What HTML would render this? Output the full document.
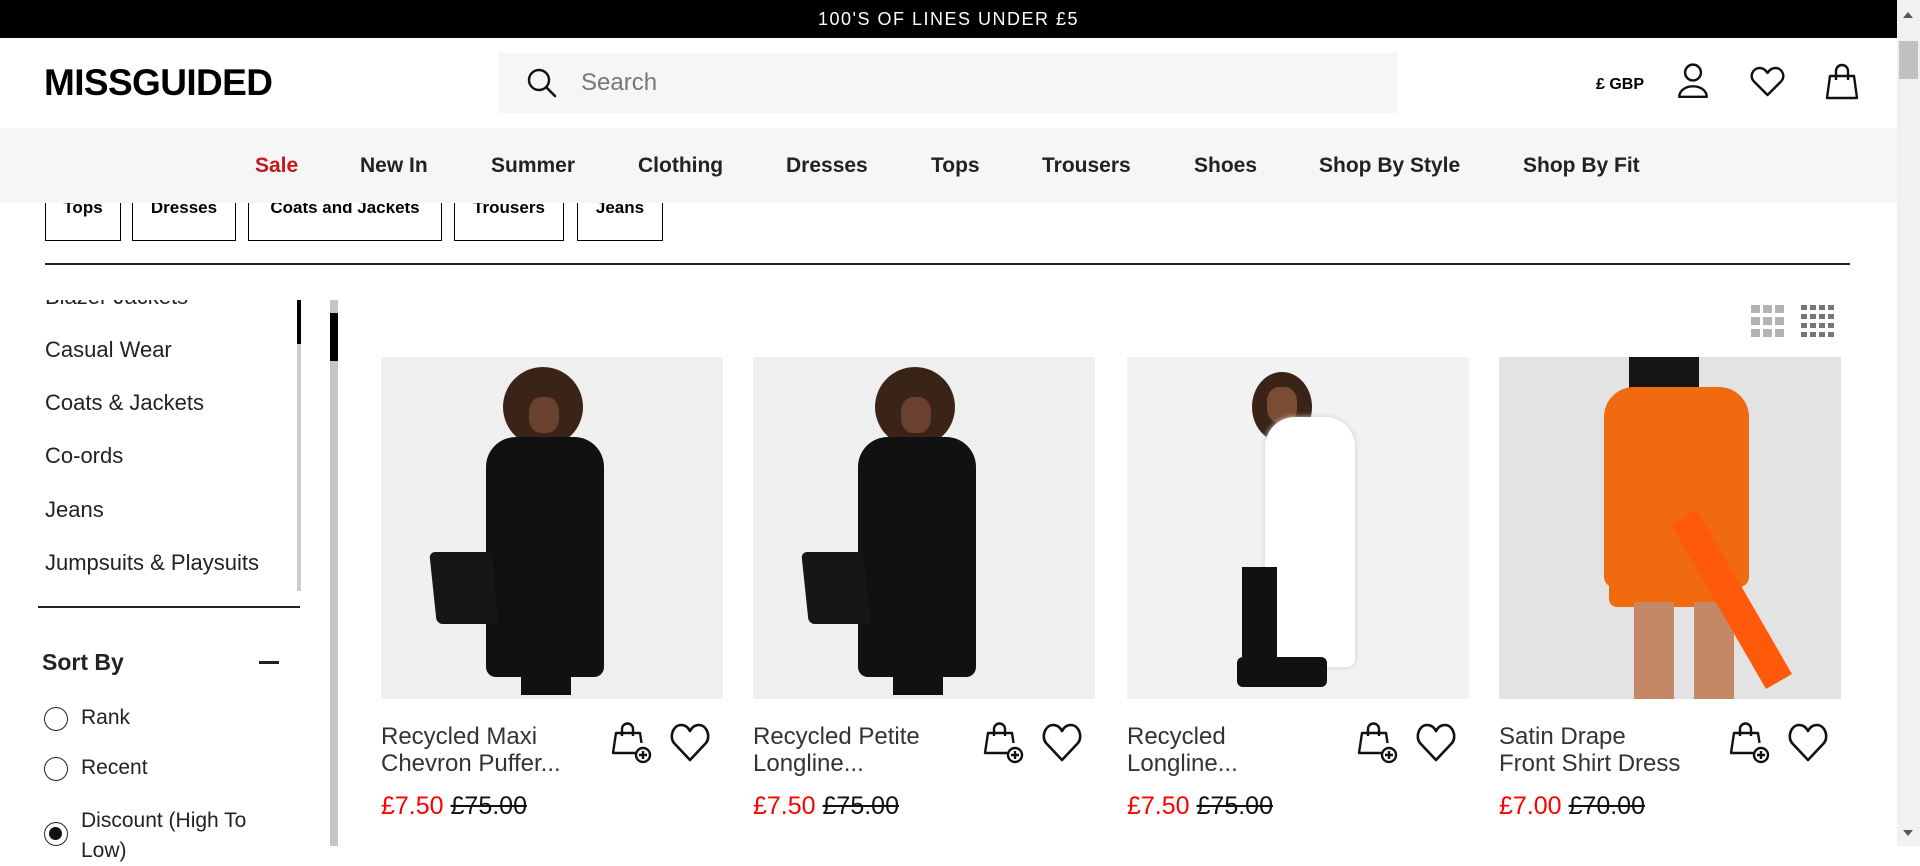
<!DOCTYPE html>
<html><head><meta charset="utf-8"><style>
*{margin:0;padding:0;box-sizing:border-box}
body{width:1920px;height:846px;overflow:hidden;background:#fff;font-family:"Liberation Sans",sans-serif;color:#000;position:relative}
.a{position:absolute}
.nav span{position:absolute;top:154px;font-size:21px;font-weight:bold;color:#222;white-space:nowrap}
.chip{position:absolute;top:180px;height:61px;border:1px solid #000;border-top:none;font-size:17px;font-weight:bold;text-align:center;padding-top:18px}
.li{position:absolute;left:45px;font-size:22px;color:#222;white-space:nowrap}
.radio{position:absolute;left:44px;width:24px;height:24px;border:1.5px solid #222;border-radius:50%}
.rl{position:absolute;left:81px;font-size:21px;color:#222}
.img{position:absolute;top:357px;width:342px;height:342px;background:#efefef;overflow:hidden}
.t{position:absolute;top:723px;font-size:24px;line-height:27px;color:#333;white-space:nowrap}
.p{position:absolute;top:792px;font-size:25px;white-space:nowrap}
.p b{color:#f00;font-weight:normal}
.p s{color:#111}
</style></head><body>
<div class="a" style="left:0;top:0;width:1897px;height:38px;background:#000;color:#fff;font-size:18px;letter-spacing:1.5px;text-align:center;line-height:38px">100'S OF LINES UNDER £5</div>

<div class="a" style="left:44px;top:62px;font-size:37px;font-weight:bold;letter-spacing:-0.6px">MISSGUIDED</div>
<div class="a" style="left:498px;top:53px;width:900px;height:60px;background:#f6f6f6"></div>
<svg class="a" style="left:526px;top:67px" width="32" height="32" viewBox="0 0 32 32"><circle cx="13" cy="13" r="10" fill="none" stroke="#111" stroke-width="2.4"/><path d="M20.5 20.5L29 29" stroke="#111" stroke-width="2.6" stroke-linecap="round"/></svg>
<div class="a" style="left:581px;top:69px;font-size:24px;color:#777">Search</div>
<div class="a" style="left:1596px;top:76px;font-size:16px;font-weight:bold">£ GBP</div>
<svg class="a" style="left:1676px;top:62px" width="34" height="38" viewBox="0 0 30 36" fill="none" stroke="#111" stroke-width="2.3"><circle cx="15" cy="10" r="7.5"/><path d="M2 33c0-6 6-10 13-10s13 4 13 10z" stroke-linejoin="round"/></svg>
<svg class="a" style="left:1750px;top:66px" width="35" height="32" viewBox="0 0 35 32" fill="none" stroke="#111" stroke-width="2.4" stroke-linejoin="round"><path d="M17.5 29L4 15.5C-1 10 3 2 9.5 2c4 0 6.5 2.5 8 5 1.5-2.5 4-5 8-5C32 2 36 10 31 15.5z"/></svg>
<svg class="a" style="left:1825px;top:63px" width="34" height="38" viewBox="0 0 34 38" fill="none" stroke="#111" stroke-width="2.4" stroke-linejoin="round"><path d="M5 13h24l3 22H2z"/><path d="M11 17V8a6 6 0 0112 0v9"/></svg>

<div class="a" style="left:0;top:128px;width:1897px;height:75px;background:#f6f6f6;z-index:2"></div>
<div class="nav a" style="left:0;top:0;z-index:3">
<span style="left:255px;color:#c8161d">Sale</span><span style="left:360px">New In</span><span style="left:491px">Summer</span><span style="left:638px">Clothing</span><span style="left:786px">Dresses</span><span style="left:931px">Tops</span><span style="left:1042px">Trousers</span><span style="left:1194px">Shoes</span><span style="left:1319px">Shop By Style</span><span style="left:1523px">Shop By Fit</span>
</div>
<div class="chip" style="left:45px;width:76px">Tops</div>
<div class="chip" style="left:132px;width:104px">Dresses</div>
<div class="chip" style="left:248px;width:194px">Coats and Jackets</div>
<div class="chip" style="left:454px;width:110px">Trousers</div>
<div class="chip" style="left:577px;width:86px">Jeans</div>
<div class="a" style="left:45px;top:263px;width:1805px;height:2px;background:#222"></div>

<div class="a" style="left:0;top:300px;width:300px;height:292px;overflow:hidden">
<div class="li" style="top:-16px">Blazer Jackets</div>
<div class="li" style="top:37px">Casual Wear</div>
<div class="li" style="top:90px">Coats &amp; Jackets</div>
<div class="li" style="top:143px">Co-ords</div>
<div class="li" style="top:197px">Jeans</div>
<div class="li" style="top:250px">Jumpsuits &amp; Playsuits</div>
</div>
<div class="a" style="left:297px;top:300px;width:4px;height:291px;background:#ccc"></div>
<div class="a" style="left:297px;top:300px;width:4px;height:44px;background:#000"></div>
<div class="a" style="left:38px;top:606px;width:262px;height:2px;background:#222"></div>
<div class="a" style="left:42px;top:649px;font-size:23px;font-weight:bold;color:#222">Sort By</div>
<div class="a" style="left:259px;top:661px;width:20px;height:2.5px;background:#222"></div>
<div class="radio" style="top:707px"></div><div class="rl" style="top:706px">Rank</div>
<div class="radio" style="top:757px"></div><div class="rl" style="top:756px">Recent</div>
<div class="radio" style="top:822px"><div style="margin:4px;width:13px;height:13px;border-radius:50%;background:#111"></div></div><div class="rl" style="top:806px;line-height:30px">Discount (High To<br>Low)</div>

<div class="a" style="left:330px;top:300px;width:8px;height:546px;background:#c6c6c6"></div>
<div class="a" style="left:330px;top:313px;width:8px;height:48px;background:#000"></div>

<svg class="a" style="left:1751px;top:305px" width="34" height="34" viewBox="0 0 34 34" fill="#b3b3b3"><rect x="0" y="0" width="9" height="8"/><rect x="12" y="0" width="9" height="8"/><rect x="24" y="0" width="9" height="8"/><rect x="0" y="12" width="9" height="8"/><rect x="12" y="12" width="9" height="8"/><rect x="24" y="12" width="9" height="8"/><rect x="0" y="24" width="9" height="8"/><rect x="12" y="24" width="9" height="8"/><rect x="24" y="24" width="9" height="8"/></svg>
<svg class="a" style="left:1801px;top:305px" width="34" height="34" viewBox="0 0 34 34" fill="#777"><g id="r"><rect x="0" y="0" width="6" height="5"/><rect x="9" y="0" width="6" height="5"/><rect x="18" y="0" width="6" height="5"/><rect x="27" y="0" width="6" height="5"/></g><use href="#r" y="9"/><use href="#r" y="18"/><use href="#r" y="27"/></svg>

<div class="img" style="left:381px">
<div class="a" style="left:122px;top:10px;width:80px;height:80px;border-radius:50%;background:#3a2418"></div>
<div class="a" style="left:148px;top:40px;width:30px;height:36px;border-radius:40%;background:#6a4130"></div>
<div class="a" style="left:105px;top:80px;width:118px;height:240px;border-radius:30px 30px 10px 10px;background:#111"></div>
<div class="a" style="left:52px;top:195px;width:62px;height:72px;background:#161616;border-radius:6px;transform:skewX(6deg)"></div>
<div class="a" style="left:140px;top:300px;width:50px;height:38px;background:#111"></div>
</div>
<div class="img" style="left:753px">
<div class="a" style="left:122px;top:10px;width:80px;height:80px;border-radius:50%;background:#3a2418"></div>
<div class="a" style="left:148px;top:40px;width:30px;height:36px;border-radius:40%;background:#6a4130"></div>
<div class="a" style="left:105px;top:80px;width:118px;height:240px;border-radius:30px 30px 10px 10px;background:#111"></div>
<div class="a" style="left:52px;top:195px;width:62px;height:72px;background:#161616;border-radius:6px;transform:skewX(6deg)"></div>
<div class="a" style="left:140px;top:300px;width:50px;height:38px;background:#111"></div>
</div>
<div class="img" style="left:1127px;background:#f2f2f2">
<div class="a" style="left:125px;top:15px;width:60px;height:70px;border-radius:50%;background:#3a2418"></div>
<div class="a" style="left:140px;top:30px;width:30px;height:36px;border-radius:40%;background:#7a4c34"></div>
<div class="a" style="left:138px;top:60px;width:90px;height:250px;border-radius:30px 30px 8px 8px;background:#fff;box-shadow:0 0 6px #ccc"></div>
<div class="a" style="left:115px;top:210px;width:35px;height:100px;background:#111"></div>
<div class="a" style="left:110px;top:300px;width:90px;height:30px;background:#111;border-radius:6px"></div>
</div>
<div class="img" style="left:1499px;background:#e3e3e3">
<div class="a" style="left:130px;top:-20px;width:70px;height:60px;border-radius:0 0 10px 10px;background:#151515"></div>
<div class="a" style="left:105px;top:30px;width:145px;height:200px;border-radius:30px 30px 10px 10px;background:#f26a10"></div>
<div class="a" style="left:110px;top:170px;width:110px;height:80px;background:#f26a10;border-radius:8px"></div>
<div class="a" style="left:135px;top:245px;width:40px;height:100px;background:#c48867"></div>
<div class="a" style="left:195px;top:245px;width:40px;height:100px;background:#c48867"></div>
<div class="a" style="left:170px;top:160px;width:30px;height:190px;background:#ff5a0a;transform:rotate(-30deg);transform-origin:top"></div>
</div>

<div class="t" style="left:381px">Recycled Maxi<br>Chevron Puffer...</div>
<div class="t" style="left:753px">Recycled Petite<br>Longline...</div>
<div class="t" style="left:1127px">Recycled<br>Longline...</div>
<div class="t" style="left:1499px">Satin Drape<br>Front Shirt Dress</div>
<div class="p" style="left:381px"><b>£7.50</b> <s>£75.00</s></div>
<div class="p" style="left:753px"><b>£7.50</b> <s>£75.00</s></div>
<div class="p" style="left:1127px"><b>£7.50</b> <s>£75.00</s></div>
<div class="p" style="left:1499px"><b>£7.00</b> <s>£70.00</s></div>

<svg width="0" height="0" style="position:absolute"><defs>
<g id="bag" fill="none" stroke="#111" stroke-width="2.4" stroke-linejoin="round"><path d="M28 31H2L5 11h24l1.5 10"/><path d="M11 14V7a5.5 5.5 0 0111 0v7"/><circle cx="32" cy="33" r="7" fill="#fff"/><path d="M32 29v8M28 33h8"/></g>
<g id="hrt" fill="none" stroke="#111" stroke-width="2.6" stroke-linejoin="round"><path d="M20 38L4 21C-1 15 3 3 11 3c4.5 0 7.5 3 9 6 1.5-3 4.5-6 9-6 8 0 12 12 7 18z"/></g>
</defs></svg>
<svg class="a" style="left:611px;top:722px" width="42" height="44"><use href="#bag"/></svg>
<svg class="a" style="left:670px;top:722px" width="42" height="44"><use href="#hrt"/></svg>
<svg class="a" style="left:983px;top:722px" width="42" height="44"><use href="#bag"/></svg>
<svg class="a" style="left:1042px;top:722px" width="42" height="44"><use href="#hrt"/></svg>
<svg class="a" style="left:1357px;top:722px" width="42" height="44"><use href="#bag"/></svg>
<svg class="a" style="left:1416px;top:722px" width="42" height="44"><use href="#hrt"/></svg>
<svg class="a" style="left:1729px;top:722px" width="42" height="44"><use href="#bag"/></svg>
<svg class="a" style="left:1788px;top:722px" width="42" height="44"><use href="#hrt"/></svg>

<div class="a" style="left:1897px;top:0;width:23px;height:846px;background:#f1f1f1"></div>
<div class="a" style="left:1899px;top:41px;width:19px;height:38px;background:#c1c1c1"></div>
<div class="a" style="left:1903px;top:12px;width:0;height:0;border-left:5px solid transparent;border-right:5px solid transparent;border-bottom:6px solid #555"></div>
<div class="a" style="left:1903px;top:830px;width:0;height:0;border-left:5px solid transparent;border-right:5px solid transparent;border-top:6px solid #555"></div>
</body></html>
